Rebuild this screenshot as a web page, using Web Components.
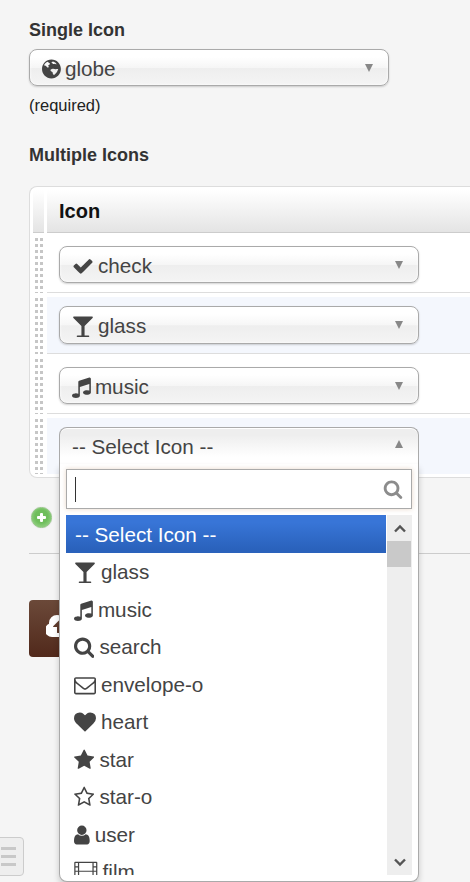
<!DOCTYPE html>
<html>
<head>
<meta charset="utf-8">
<title>Icon fields</title>
<style>
  html, body { margin: 0; height: 882px; overflow: hidden; background: #f5f5f5; }
  body { font-family: "Liberation Sans", Arial, sans-serif; font-size: 16px; color: #333; }
</style>
</head>
<body>
<field-form>
  <field-label>Single Icon</field-label>
  <icon-select style="margin-top:9px"><icon-glyph name="globe"></icon-glyph>globe</icon-select>
  <field-note>(required)</field-note>
  <field-label style="margin-top:30px">Multiple Icons</field-label>
  <icon-table heading="Icon">
    <icon-row><icon-select><icon-glyph name="check"></icon-glyph>check</icon-select></icon-row>
    <icon-row alt><icon-select style="--h:38px"><icon-glyph name="glass"></icon-glyph>glass</icon-select></icon-row>
    <icon-row><icon-select><icon-glyph name="music"></icon-glyph>music</icon-select></icon-row>
    <icon-row alt last>
      <icon-select open>
        -- Select Icon --
        <icon-dropdown slot="panel">
          <icon-option selected>-- Select Icon --</icon-option>
          <icon-option><icon-glyph name="glass"></icon-glyph>glass</icon-option>
          <icon-option><icon-glyph name="music"></icon-glyph>music</icon-option>
          <icon-option><icon-glyph name="search"></icon-glyph>search</icon-option>
          <icon-option><icon-glyph name="envelope-o"></icon-glyph>envelope-o</icon-option>
          <icon-option><icon-glyph name="heart"></icon-glyph>heart</icon-option>
          <icon-option><icon-glyph name="star"></icon-glyph>star</icon-option>
          <icon-option><icon-glyph name="star-o"></icon-glyph>star-o</icon-option>
          <icon-option><icon-glyph name="user"></icon-glyph>user</icon-option>
          <icon-option><icon-glyph name="film"></icon-glyph>film</icon-option>
        </icon-dropdown>
      </icon-select>
    </icon-row>
  </icon-table>
  <add-button></add-button>
  <form-rule></form-rule>
  <save-button></save-button>
</field-form>
<menu-toggle></menu-toggle>

<script>
// each icon: x offset of the viewBox, its width, and the shape
const ICONS = {
  check: [0, 1792, '<path d="M1671 566q0 40-28 68l-724 724-136 136q-28 28-68 28t-68-28l-136-136-362-362q-28-28-28-68t28-68l136-136q28-28 68-28t68 28l294 295 656-657q28-28 68-28t68 28l136 136q28 28 28 68z"/>'],
  glass: [0, 1792, '<path d="M1699 186q0 35-43 78l-632 632v768h320q26 0 45 19t19 45-19 45-45 19h-896q-26 0-45-19t-19-45 19-45 45-19h320v-768l-632-632q-43-43-43-78 0-23 18-36.5t38-17.5 43-4h1408q23 0 43 4t38 17.5 18 36.5z"/>'],
  music: [128, 1536, '<path d="M1664 224v1120q0 50-34 89t-86 60.5-103.5 32-96.5 10.5-96.5-10.5-103.5-32-86-60.5-34-89 34-89 86-60.5 103.5-32 96.5-10.5q105 0 192 39v-537l-768 237v709q0 50-34 89t-86 60.5-103.5 32-96.5 10.5-96.5-10.5-103.5-32-86-60.5-34-89 34-89 86-60.5 103.5-32 96.5-10.5q105 0 192 39v-967q0-31 19-56.5t49-35.5l832-256q12-4 28-4 40 0 68 28t28 68z"/>'],
  search: [64, 1664, '<path d="M1216 832q0-185-131.5-316.5t-316.5-131.5-316.5 131.5-131.5 316.5 131.5 316.5 316.5 131.5 316.5-131.5 131.5-316.5zm512 832q0 52-38 90t-90 38q-54 0-90-38l-343-342q-179 124-399 124-143 0-273.5-55.5t-225-150-150-225-55.5-273.5 55.5-273.5 150-225 225-150 273.5-55.5 273.5 55.5 225 150 150 225 55.5 273.5q0 220-124 399l343 343q37 37 37 90z"/>'],
  'envelope-o': [0, 1792, '<path d="M1664 1504v-768q-32 36-69 66-268 206-426 338-51 43-83 67t-86.5 48.5-102.5 24.5h-2q-48 0-102.5-24.5t-86.5-48.5-83-67q-158-132-426-338-37-30-69-66v768q0 13 9.5 22.5t22.5 9.5h1472q13 0 22.5-9.5t9.5-22.5zm0-1051v-24.5l-.5-13-3-12.5-5.5-9-9-7.5-14-2.5h-1472q-13 0-22.5 9.5t-9.5 22.5q0 168 147 284 193 152 401 317 6 5 35 29.5t46 37.5 44.5 31.5 50.5 27.5 43 9h2q20 0 43-9t50.5-27.5 44.5-31.5 46-37.5 35-29.5q208-165 401-317 54-43 100.5-115.5t46.5-131.5zm128-37v1088q0 66-47 113t-113 47h-1472q-66 0-113-47t-47-113v-1088q0-66 47-113t113-47h1472q66 0 113 47t47 113z"/>'],
  heart: [0, 1792, '<path d="M896 1664q-26 0-44-18l-624-602q-10-8-27.5-26t-55.5-65.5-68-97.5-53.5-121-23.5-138q0-220 127-344t351-124q62 0 126.5 21.5t120 58 95.5 68.5 76 68q36-36 76-68t95.5-68.5 120-58 126.5-21.5q224 0 351 124t127 344q0 221-229 450l-623 600q-18 18-44 18z"/>'],
  star: [64, 1664, '<path d="M1728 647q0 22-26 48l-363 354 86 500q1 7 1 20 0 21-10.5 35.5t-30.5 14.5q-19 0-40-12l-449-236-449 236q-22 12-40 12-21 0-31.5-14.5t-10.5-35.5q0-6 2-20l86-500-364-354q-25-27-25-48 0-37 56-46l502-73 225-455q19-41 49-41t49 41l225 455 502 73q56 9 56 46z"/>'],
  'star-o': [64, 1664, '<path d="M1201 1004l306-297-422-62-189-382-189 382-422 62 306 297-73 421 378-199 377 199zm527-357q0 22-26 48l-363 354 86 500q1 7 1 20 0 50-41 50-19 0-40-12l-449-236-449 236q-22 12-40 12-21 0-31.5-14.5t-10.5-35.5q0-6 2-20l86-500-364-354q-25-27-25-48 0-37 56-46l502-73 225-455q19-41 49-41t49 41l225 455 502 73q56 9 56 46z"/>'],
  user: [256, 1280, '<path d="M1536 1399q0 109-62.5 187t-150.5 78h-854q-88 0-150.5-78t-62.5-187q0-85 8.5-160.5t31.5-152 58.5-131 94-89 134.5-34.5q131 128 313 128t313-128q76 0 134.5 34.5t94 89 58.5 131 31.5 152 8.5 160.5zm-256-887q0 159-112.5 271.5t-271.5 112.5-271.5-112.5-112.5-271.5 112.5-271.5 271.5-112.5 271.5 112.5 112.5 271.5z"/>'],
  film: [0, 1920, '<path fill-rule="evenodd" d="M100 64h1720q80 0 80 80v1500q0 80-80 80h-1720q-80 0-80-80v-1500q0-80 80-80zM120 164v260h200v-260zM120 524v260h200v-260zM420 164v620h1080v-620zM1600 164v260h200v-260zM1600 524v260h200v-260zM120 884v260h200v-260zM420 884v740h1080v-740zM1600 884v260h200v-260z"/>'],
  globe: [128, 1536, '<path fill-rule="evenodd" d="M896 128c424 0 768 344 768 768s-344 768-768 768-768-344-768-768 344-768 768-768zM560 300c-120 60-220 170-270 300 60 40 110 10 160 60 30 70 100 60 130 130 70 10 110-50 90-110-50-40-40-90 10-110 60-20 100-70 90-130-70-50-140-110-210-140zM1020 290c-40 40-110 40-120 100 30 50 100 40 130 90 60 20 100-30 160-20 30 40 90 30 130 50-60-110-170-190-300-220zM1000 880c-80 10-170 40-180 120 10 80 90 110 150 140 50 60 20 140 70 200 40 50 110 40 140-10 60-70 140-130 180-210 10-80 70-130 90-200-60-60-140 0-210-10-80-10-160-40-240-30z"/>']
};

function define(tag, html, setup) {
  customElements.define(tag, class extends HTMLElement {
    connectedCallback() {
      if (this.shadowRoot) return;
      this.attachShadow({ mode: 'open' });
      this.shadowRoot.innerHTML = typeof html === 'function' ? html(this) : html;
      if (setup) setup(this);
    }
  });
}

define('field-form', `
  <style>:host { display: block; padding: 20px 0 0 29px; }</style>
  <slot></slot>
`);

define('field-label', `
  <style>:host { display: block; font-size: 18px; font-weight: bold; line-height: 20px; color: #333; }</style>
  <slot></slot>
`);

define('field-note', `
  <style>:host { display: block; margin-top: 9px; line-height: 20px; color: #222; font-size: 16.5px; }</style>
  <slot></slot>
`);

define('icon-glyph', el => {
  const [x, w, shape] = ICONS[el.getAttribute('name')];
  const size = 22;
  return `
    <style>
      :host { display: inline-block; flex: none; line-height: 0; }
      svg { display: block; fill: currentColor; }
    </style>
    <svg width="${(w / 1792 * size).toFixed(1)}" height="${size}" viewBox="${x} 0 ${w} 1792">${shape}</svg>
  `;
});

define('icon-select', `
  <style>
    :host {
      display: block;
      position: relative;
      box-sizing: border-box;
      width: 360px;
      height: var(--h, 37px);
      border: 1px solid #aaa;
      border-radius: 8px;
      background: linear-gradient(#fff 20%, #f6f6f6 50%, #eee 52%, #f4f4f4 100%);
      box-shadow: inset 0 0 3px #fff, 0 1px 2px rgba(0,0,0,.18);
      color: #444;
      font-size: 20.7px;
    }
    :host([open]) {
      height: 37px;
      border-bottom: 0;
      border-radius: 8px 8px 0 0;
      background: linear-gradient(#eee 20%, #fff 80%);
      box-shadow: 0 1px 0 #fff inset;
    }
    .value {
      display: flex; align-items: center; gap: 4px;
      box-sizing: border-box; height: 100%;
      padding: 2px 40px 0 12px;
      white-space: nowrap;
    }
    .arrow {
      position: absolute; right: 15px; top: 50%; margin-top: -4px;
      width: 0; height: 0;
      border: 4.5px solid transparent; border-bottom: 0; border-top: 8px solid #888;
    }
    :host([open]) .arrow { border-top: 0; border-bottom: 8px solid #888; margin-top: -6px; }
  </style>
  <div class="value"><slot></slot></div>
  <span class="arrow"></span>
  <slot name="panel"></slot>
`);

define('icon-table', el => `
  <style>
    :host {
      display: block;
      box-sizing: border-box;
      width: 460px;
      margin-top: 21px;
      padding: 3px 0 3px 3px;
      border: 1px solid #ddd;
      border-right: 0;
      border-radius: 8px 0 0 8px;
      background: #fff;
    }
    .head { display: grid; grid-template-columns: 11px 1fr; column-gap: 3px; height: 43px; }
    .head div {
      box-sizing: border-box;
      border-bottom: 1px solid #ccc;
      background: linear-gradient(#fff, #e4e4e4);
    }
    .title { padding-left: 12px; font: bold 20px/42px "Liberation Sans", Arial, sans-serif; color: #111; }
  </style>
  <div class="head"><div></div><div class="title">${el.getAttribute('heading')}</div></div>
  <slot></slot>
`);

define('icon-row', `
  <style>
    :host { display: grid; grid-template-columns: 11px 1fr; column-gap: 3px; }
    .handle {
      margin: 4px 0 0 0;
      background: conic-gradient(from 270deg at 3px 3px, #c6c6c6 25%, transparent 0) 2px 1px / 5px 6px;
    }
    .cell { padding: 13px 12px 9px; border-bottom: 1px solid #ddd; }
    :host([alt]) .cell { background: linear-gradient(#f4f7fd, #f4f7fd) 0 4px no-repeat; }
    :host([last]) .cell { border-bottom: 0; padding-bottom: 10px; }
  </style>
  <div class="handle"></div>
  <div class="cell"><slot></slot></div>
`);

define('icon-dropdown', `
  <style>
    :host {
      display: block;
      position: absolute;
      z-index: 5;
      left: -1px;
      top: 36px;
      box-sizing: border-box;
      width: 360px;
      height: 418px;
      padding: 5px 6px;
      background: #fff;
      border: 1px solid #aaa;
      border-top: 0;
      border-radius: 0 0 8px 8px;
      box-shadow: 0 4px 6px rgba(0,0,0,.18);
    }
    .search {
      display: flex;
      align-items: center;
      justify-content: space-between;
      box-sizing: border-box;
      height: 40px;
      padding: 0 8px;
      border: 1px solid #aaa;
      box-shadow: 0 0 5px rgba(190,140,100,.35);
      color: #8c8c8c;
    }
    .caret { width: 1px; height: 25px; background: #333; }
    .search svg { width: 20px; height: 20px; fill: currentColor; }
    .body { display: flex; gap: 1px; height: 360px; margin-top: 6px; }
    .list { flex: 1; overflow: hidden; }
    .bar {
      flex: none; width: 25px;
      display: flex; flex-direction: column;
      background: #eee;
    }
    .btn { display: flex; align-items: center; justify-content: center; height: 26px; }
    .btn svg { width: 12px; height: 9px; fill: none; stroke: #555; stroke-width: 2.4; }
    .thumb { height: 26px; margin-right: 1px; background: #c9c9c9; }
    .fill { flex: 1; }
  </style>
  <div class="search">
    <span class="caret"></span>
    <svg viewBox="0 0 1792 1792"><path d="M1216 832q0-185-131.5-316.5t-316.5-131.5-316.5 131.5-131.5 316.5 131.5 316.5 316.5 131.5 316.5-131.5 131.5-316.5zm512 832q0 52-38 90t-90 38q-54 0-90-38l-343-342q-179 124-399 124-143 0-273.5-55.5t-225-150-150-225-55.5-273.5 55.5-273.5 150-225 225-150 273.5-55.5 273.5 55.5 225 150 150 225 55.5 273.5q0 220-124 399l343 343q37 37 37 90z"/></svg>
  </div>
  <div class="body">
    <div class="list"><slot></slot></div>
    <div class="bar">
      <div class="btn"><svg viewBox="0 0 12 9"><path d="M1 7.5L6 2.5l5 5"/></svg></div>
      <div class="thumb"></div>
      <div class="fill"></div>
      <div class="btn"><svg viewBox="0 0 12 9"><path d="M1 1.5L6 6.5l5-5"/></svg></div>
    </div>
  </div>
`);

define('icon-option', `
  <style>
    :host {
      display: flex;
      align-items: center;
      gap: 5px;
      box-sizing: border-box;
      height: 37.5px;
      padding: 2px 0 0 8px;
      color: #444;
      white-space: nowrap;
    }
    :host([selected]) { color: #fff; background: linear-gradient(#3875d7 20%, #2a62bc 90%); padding: 3px 0 0 9px; }
  </style>
  <slot></slot>
`);

define('add-button', `
  <style>
    :host {
      display: block;
      position: relative;
      box-sizing: border-box;
      width: 21px; height: 21px;
      margin: 29px 0 0 2px;
      border: 1px solid #8cc47c;
      border-radius: 50%;
      background: radial-gradient(circle at 50% 45%, #6fbe5c 0 45%, #a9dc9b 100%);
      box-shadow: 0 0 1px rgba(0,0,0,.25);
    }
    i { position: absolute; background: #fff; border-radius: 1px; }
    .h { left: 5px; right: 5px; top: 8px; height: 3px; }
    .v { top: 5px; bottom: 5px; left: 8px; width: 3px; }
  </style>
  <i class="h"></i><i class="v"></i>
`);

define('form-rule', `
  <style>:host { display: block; height: 1px; margin-top: 25px; background: #ccc; }</style>
`);

define('save-button', `
  <style>
    :host {
      display: flex;
      align-items: center;
      box-sizing: border-box;
      width: 110px; height: 57px;
      margin-top: 46px;
      padding: 0 0 3px 17px;
      border-radius: 4px;
      background: linear-gradient(#6b4939, #51291b);
    }
    svg { width: 30px; height: 30px; fill: #fff; }
  </style>
  <svg viewBox="0 0 1920 1792"><path d="M1216 864q0-14-9-23l-352-352q-9-9-23-9t-23 9l-351 351q-10 12-10 24 0 14 9 23t23 9h224v352q0 13 9.5 22.5t22.5 9.5h192q13 0 22.5-9.5t9.5-22.5v-352h224q13 0 22.5-9.5t9.5-22.5zm640 288q0 159-112.5 271.5t-271.5 112.5h-1088q-185 0-316.5-131.5t-131.5-316.5q0-130 70-240t188-165q-2-30-2-43 0-212 150-362t362-150q156 0 285.5 87t188.5 231q71-62 166-62 106 0 181 75t75 181q0 76-41 138 130 31 213.5 135.5t83.5 238.5z"/></svg>
`);

define('menu-toggle', `
  <style>
    :host {
      position: fixed;
      left: -20px; top: 837px;
      box-sizing: border-box;
      width: 44px; height: 39px;
      display: flex; flex-direction: column; justify-content: center; gap: 5.5px;
      padding: 0 7px 0 20px;
      border: 1px solid #ccc;
      border-radius: 4px;
      background: #eee;
    }
    i { display: block; height: 2.5px; background: #c8c8c8; }
  </style>
  <i></i><i></i><i></i>
`);
</script>
</body>
</html>
